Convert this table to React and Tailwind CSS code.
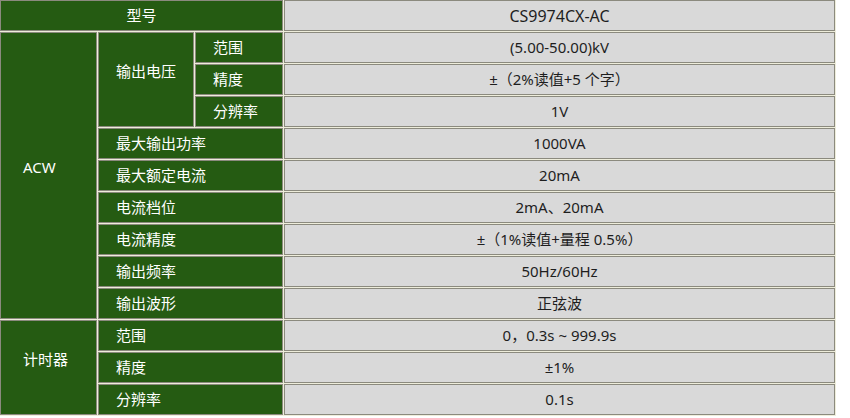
const green = "bg-[#255b12] text-white";
const gray = "bg-[#d9d9d9] text-[#1e1e1e] text-center";
const cell = "border border-[#8b8a7e] p-0 h-[31px] align-middle";

const acwRows = [
  ["最大输出功率", "1000VA"],
  ["最大额定电流", "20mA"],
  ["电流档位", "2mA、20mA"],
  ["电流精度", "±（1%读值+量程 0.5%）"],
  ["输出频率", "50Hz/60Hz"],
  ["输出波形", "正弦波"],
];

export default function App() {
  return (
    <div className="w-[850px] h-[418px] bg-white overflow-hidden">
      <table
        className="-mt-px -ml-px table-fixed border-separate border-spacing-[1px] bg-[#eeeddb] text-[15px] leading-none"
        style={{ width: 837, fontFamily: '"Noto Sans", "Noto Sans CJK SC", sans-serif' }}
      >
        <colgroup>
          <col style={{ width: 97 }} />
          <col style={{ width: 96 }} />
          <col style={{ width: 88 }} />
          <col />
        </colgroup>
        <tbody>
          <tr>
            <td colSpan={3} className={`${cell} ${green} text-center`}>型号</td>
            <td className={`${cell} ${gray} text-[16px]`}>CS9974CX-AC</td>
          </tr>
          <tr>
            <td rowSpan={9} className={`${cell} ${green} pl-[22px] pb-[16px] text-left`}>ACW</td>
            <td rowSpan={3} className={`${cell} ${green} text-center pb-[16px]`}>输出电压</td>
            <td className={`${cell} ${green} pl-[17px]`}>范围</td>
            <td className={`${cell} ${gray}`}>(5.00-50.00)kV</td>
          </tr>
          <tr>
            <td className={`${cell} ${green} pl-[17px]`}>精度</td>
            <td className={`${cell} ${gray}`}>±（2%读值+5 个字）</td>
          </tr>
          <tr>
            <td className={`${cell} ${green} pl-[17px]`}>分辨率</td>
            <td className={`${cell} ${gray}`}>1V</td>
          </tr>
          {acwRows.map(([k, v]) => (
            <tr key={k}>
              <td colSpan={2} className={`${cell} ${green} pl-[17px]`}>{k}</td>
              <td className={`${cell} ${gray}`}>{v}</td>
            </tr>
          ))}
          <tr>
            <td rowSpan={3} className={`${cell} ${green} pl-[22px] pb-[16px] text-left`}>计时器</td>
            <td colSpan={2} className={`${cell} ${green} pl-[17px]`}>范围</td>
            <td className={`${cell} ${gray}`}>0，0.3s ~ 999.9s</td>
          </tr>
          <tr>
            <td colSpan={2} className={`${cell} ${green} pl-[17px]`}>精度</td>
            <td className={`${cell} ${gray}`}>±1%</td>
          </tr>
          <tr>
            <td colSpan={2} className={`${cell} ${green} pl-[17px]`}>分辨率</td>
            <td className={`${cell} ${gray}`}>0.1s</td>
          </tr>
        </tbody>
      </table>
    </div>
  );
}
